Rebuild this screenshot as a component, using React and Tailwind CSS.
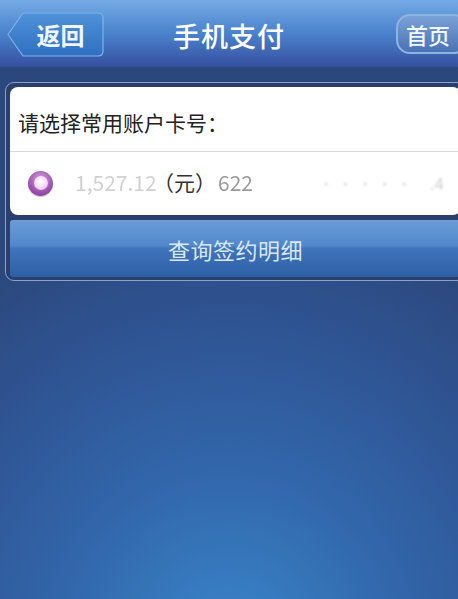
import React from 'react';

const font = { fontFamily: '"Noto Sans CJK SC", "Noto Sans", sans-serif' };

const BackButton = () => (
    <button className="relative w-[97px] h-[45px] flex items-center justify-center">
        <svg className="absolute inset-0" width="97" height="45" viewBox="0 0 97 45">
            <defs>
                <linearGradient id="bk" x1="0" y1="0" x2="0" y2="1">
                    <stop offset="0" stopColor="#4f93d8" />
                    <stop offset="1" stopColor="#2f6fc0" />
                </linearGradient>
            </defs>
            <path
                d="M1 22.5 L16 1 L91 1 Q96 1 96 6 L96 39 Q96 44 91 44 L16 44 Z"
                fill="url(#bk)"
                stroke="#7fb2e8"
                strokeWidth="1.2"
            />
        </svg>
        <span className="relative pl-[10px] text-[24px] leading-none text-[#eef5fc] font-bold">返回</span>
    </button>
);

export default function App() {
    return (
        <div
            className="w-[458px] h-[599px] overflow-hidden bg-[radial-gradient(ellipse_95%_75%_at_50%_108%,#3a86ca_0%,#3266ab_40%,#2f5594_70%,#2c477c_100%)]"
            style={font}
        >
            {/* 顶部导航 */}
            <header className="h-[67px] grid grid-cols-[1fr_auto_1fr] items-center bg-gradient-to-b from-[#74aae4] via-[#4a82cc] to-[#3650a0]">
                <div className="pl-[7px] pt-[2px]">
                    <BackButton />
                </div>
                <h1 className="text-[27px] leading-none text-white font-medium tracking-[1px] pt-[4px]">手机支付</h1>
                <div className="flex justify-end">
                    <button className="-mr-[10px] w-[72px] h-[40px] rounded-[14px] border-2 border-[#8db3df] bg-gradient-to-b from-[#7aa2d6] to-[#4a72b4] flex items-center pl-[8px]">
                        <span className="text-[22px] leading-none text-[#f2f7fd] font-medium">首页</span>
                    </button>
                </div>
            </header>

            {/* 内容面板 */}
            <div className="mt-[15px] ml-[5px] -mr-[8px] rounded-[9px] border border-[#8aa2cc] bg-[#2a3f6e] p-[4px] pb-[3px]">
                <div className="bg-white rounded-[8px] overflow-hidden">
                    <div className="h-[64px] flex items-center pl-[8px] pt-[8px] text-[21px] text-[#222]">
                        请选择常用账户卡号：
                    </div>
                    <div className="h-px bg-[#d8d8d8]" />
                    <div className="h-[63px] flex items-center pl-[18px] pb-[1px]">
                        <div className="shrink-0 w-[25px] h-[25px] rounded-full bg-[radial-gradient(circle_at_50%_35%,#d9a6e2_0%,#a058b4_55%,#7a2f8e_100%)] flex items-center justify-center shadow-[0_1px_1px_rgba(0,0,0,0.25)]">
                            <div className="w-[14px] h-[14px] rounded-full bg-[radial-gradient(circle_at_45%_40%,#ffffff_0%,#f1d9f6_55%,#d9ace6_100%)]" />
                        </div>
                        <div className="ml-[22px] flex items-center text-[21px] text-[#333] whitespace-nowrap">
                            <span className="w-[78px] text-[#d0d0d0] blur-[0.7px]">1,527.12</span>
                            <span>（元）</span>
                            <span className="ml-[2px] w-[100px] text-[#9a9a9a] blur-[0.4px]">622</span>
                            <span className="shrink-0 text-[#e2e2e2] blur-[0.8px] text-[16px]">· · · · ·</span>
                            <span className="shrink-0 ml-[18px] text-[#d0d0d0] blur-[0.8px] text-[16px]">.4</span>
                        </div>
                    </div>
                </div>
                <button className="mt-[5px] w-full h-[57px] rounded-[3px] bg-[linear-gradient(to_bottom,#6b9cd8_0%,#5188cc_45%,#3f74bb_50%,#2e5fa5_100%)] flex items-center justify-center">
                    <span className="text-[22px] leading-none text-[#dbe8f6] tracking-[0.5px]">查询签约明细</span>
                </button>
            </div>
        </div>
    );
}
